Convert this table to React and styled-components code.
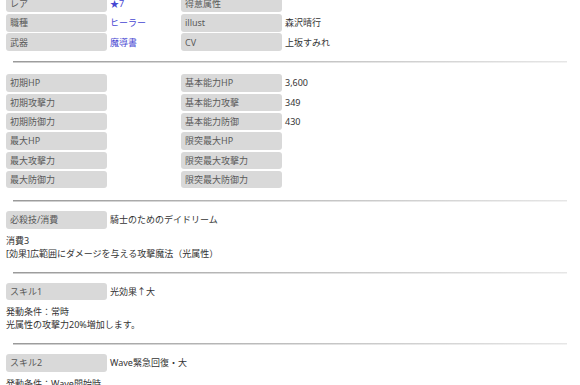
import React from "react";
import styled, { createGlobalStyle } from "styled-components";

const Global = createGlobalStyle`
  html, body { margin: 0; padding: 0; background: #fff; }
  body {
    font-family: "Noto Sans", "Noto Sans CJK JP", sans-serif;
    font-size: 9px;
    color: #333;
    overflow: hidden;
  }
`;

const Page = styled.div`
  width: 580px;
  margin-top: -6px;
  padding: 0 6px;
  box-sizing: border-box;
`;

const Table = styled.div`
  display: grid;
  grid-template-columns: 101px 74px 101px 1fr;
  grid-auto-rows: ${(p) => p.$row || 17.4}px;
  row-gap: ${(p) => p.$gap || 1.95}px;
`;

const Label = styled.div`
  background: #d9d9d9;
  border-radius: 3px;
  color: #5a5a5a;
  padding-left: 4px;
  display: flex;
  align-items: center;
  white-space: nowrap;
`;

const Value = styled.div`
  display: flex;
  align-items: center;
  padding-left: 3px;
  color: ${(p) => (p.$link ? "#4646d2" : "#333")};
  white-space: nowrap;
`;

const Divider = styled.hr`
  border: 0;
  height: 2px;
  margin: ${(p) => p.$m || "10px 7px 11px 7px"};
  background: linear-gradient(to right, #9a9a9a, #e6e6e6);
  box-shadow: inset 0 -1px 0 rgba(255, 255, 255, 0.5);
`;

const SkillHead = styled.div`
  display: grid;
  grid-template-columns: 101px 1fr;
  height: 17.5px;
`;

const Desc = styled.div`
  margin-top: 5px;
  line-height: 13px;
  color: #333;
`;

const top = [
  ["レア", "★7", true, "得意属性", ""],
  ["職種", "ヒーラー", true, "illust", "森沢晴行"],
  ["武器", "魔導書", true, "CV", "上坂すみれ"],
];

const stats = [
  ["初期HP", "", "基本能力HP", "3,600"],
  ["初期攻撃力", "", "基本能力攻撃", "349"],
  ["初期防御力", "", "基本能力防御", "430"],
  ["最大HP", "", "限突最大HP", ""],
  ["最大攻撃力", "", "限突最大攻撃力", ""],
  ["最大防御力", "", "限突最大防御力", ""],
];

const skills = [
  {
    label: "必殺技/消費",
    name: "騎士のためのデイドリーム",
    lines: ["消費3", "[効果]広範囲にダメージを与える攻撃魔法（光属性）"],
  },
  {
    label: "スキル1",
    name: "光効果↑大",
    lines: ["発動条件：常時", "光属性の攻撃力20%増加します。"],
  },
  {
    label: "スキル2",
    name: "Wave緊急回復・大",
    lines: ["発動条件：Wave開始時"],
  },
];

export default function App() {
  return (
    <Page>
      <Global />
      <Table $row={18} $gap={1.6}>
        {top.map(([l, v, link, l2, v2]) => (
          <React.Fragment key={l}>
            <Label>{l}</Label>
            <Value $link={link}>{v}</Value>
            <Label>{l2}</Label>
            <Value>{v2}</Value>
          </React.Fragment>
        ))}
      </Table>
      <Divider />
      <Table>
        {stats.map(([l, v, l2, v2]) => (
          <React.Fragment key={l}>
            <Label>{l}</Label>
            <Value>{v}</Value>
            <Label>{l2}</Label>
            <Value>{v2}</Value>
          </React.Fragment>
        ))}
      </Table>
      {skills.map((s) => (
        <React.Fragment key={s.label}>
          <Divider $m="12px 7px 9px 7px" />
          <SkillHead>
            <Label>{s.label}</Label>
            <Value>{s.name}</Value>
          </SkillHead>
          <Desc>
            {s.lines.map((t) => (
              <div key={t}>{t}</div>
            ))}
          </Desc>
        </React.Fragment>
      ))}
    </Page>
  );
}
